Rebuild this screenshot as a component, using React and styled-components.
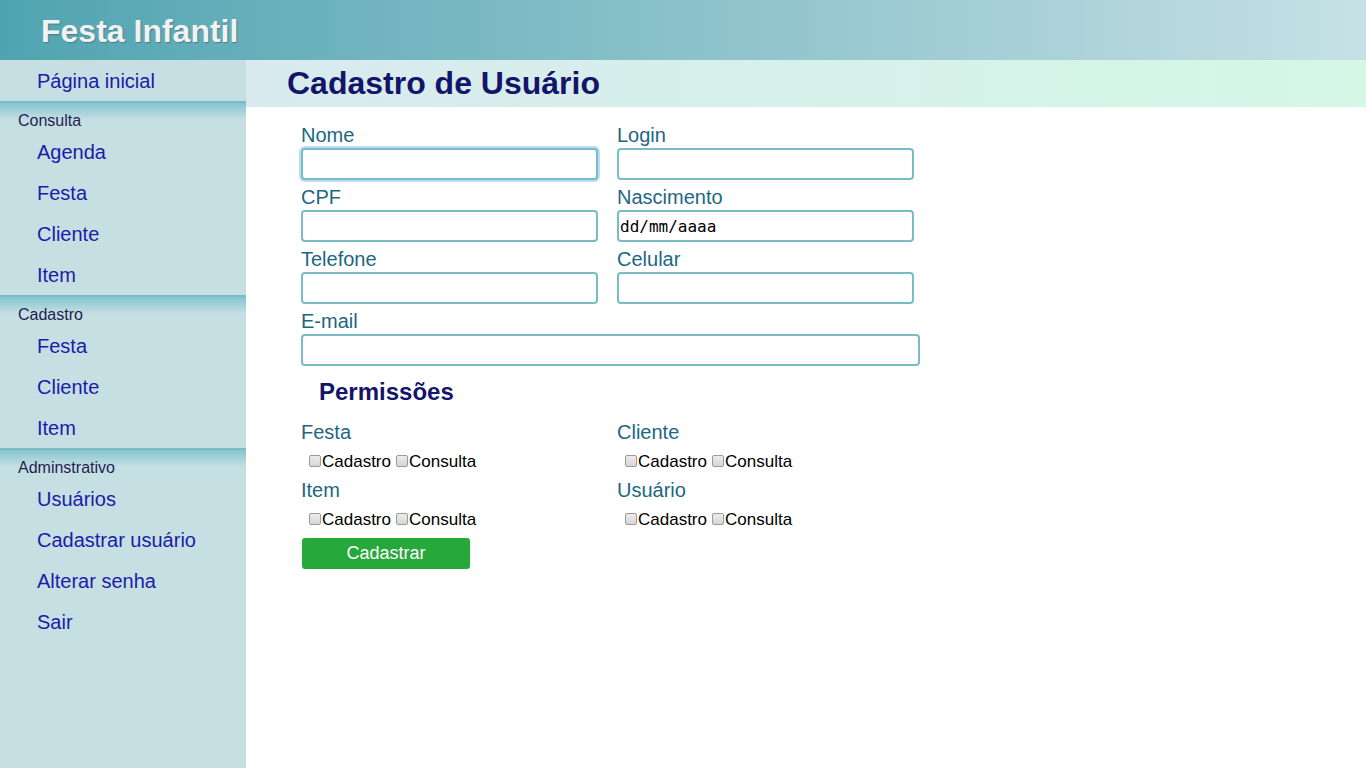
import React from 'react'
import styled, { createGlobalStyle } from 'styled-components'

const GlobalStyle = createGlobalStyle`
  html, body {
    margin: 0;
    padding: 0;
    font-family: "Liberation Sans", Arial, sans-serif;
    background: #fff;
  }
`

const Page = styled.div`
  display: flex;
  flex-direction: column;
  min-height: 768px;
`

const TopBar = styled.div`
  height: 60px;
  background: linear-gradient(to right, #50a4b1, #a8d0d7 75%, #c6e1e5);
  display: flex;
  align-items: center;
  padding-left: 41px;
`

const Brand = styled.div`
  font-size: 32px;
  font-weight: 700;
  color: #f2f2f2;
  text-shadow: 1px 1px 1px #4b7c86;
  transform: translateY(1px);
`

const Body = styled.div`
  flex: 1;
  display: flex;
`

const Sidebar = styled.div`
  width: 246px;
  flex-shrink: 0;
  background: #c5dfe3;
`

const NavLink = styled.div`
  height: 41px;
  box-sizing: border-box;
  padding-top: 2px;
  display: flex;
  align-items: center;
  padding-left: 37px;
  font-size: 20px;
  color: #1c1ca8;
`

const Section = styled.div`
  border-top: 2px solid #79bcc7;
`

const SectionTitle = styled.div`
  height: 28px;
  padding-left: 18px;
  padding-top: 8px;
  box-sizing: border-box;
  display: flex;
  align-items: center;
  font-size: 16px;
  color: #1e1e50;
  background: linear-gradient(to bottom, #86c5ce, #c5dfe3 60%);
`

const Main = styled.div`
  flex: 1;
`

const TitleBar = styled.div`
  height: 47px;
  background: linear-gradient(to right, #d8eaee, #d4f7e6);
  display: flex;
  align-items: center;
  padding-left: 41px;
`

const Title = styled.h1`
  margin: 0;
  font-size: 32px;
  font-weight: 700;
  color: #14146a;
`

const Form = styled.div`
  padding: 16px 0 0 55px;
  width: 619px;
`

const Grid = styled.div`
  display: grid;
  grid-template-columns: 297px 297px;
  column-gap: 19px;
`

const Field = styled.div`
  display: flex;
  flex-direction: column;
  grid-column: ${p => (p.$wide ? '1 / span 2' : 'auto')};
  width: ${p => (p.$wide ? '619px' : '297px')};
  margin-bottom: 5px;
`

const Label = styled.label`
  font-size: 20px;
  color: #1d6780;
  line-height: 25px;
  height: 25px;
`

const Input = styled.input`
  box-sizing: border-box;
  height: 32px;
  width: 100%;
  border: 2px solid #79bcc6;
  border-radius: 4px;
  outline: none;
  padding: 0 1px;
  font-size: 16px;
  font-family: "DejaVu Sans Mono", "Liberation Mono", monospace;
  color: #000;
  box-shadow: ${p => (p.$focus ? '0 0 0 2px #bcdcf7' : 'none')};
  &::placeholder {
    color: #000;
  }
`

const Subtitle = styled.h2`
  margin: 4px 0 0 18px;
  font-size: 24px;
  font-weight: 700;
  color: #14146a;
  height: 34px;
  line-height: 34px;
`

const PermGroup = styled.div`
  display: flex;
  flex-direction: column;
  margin-top: ${p => (p.$first ? '10px' : '0')};
`

const PermLabel = styled.div`
  font-size: 20px;
  color: #1d6780;
  height: 26px;
  line-height: 26px;
`

const Checks = styled.div`
  display: flex;
  align-items: center;
  height: 32px;
  box-sizing: border-box;
  padding: 2px 0 0 8px;
  font-size: 17px;
  color: #000;
`

const Check = styled.label`
  display: flex;
  align-items: center;
  margin-right: 5px;
`

const Box = styled.span`
  width: 12px;
  height: 12px;
  box-sizing: border-box;
  border: 1px solid #9a9a9a;
  border-radius: 2px;
  background: linear-gradient(#ececec, #d6d6d6);
  margin-right: 1px;
  transform: translateY(-1px);
`

const Button = styled.button`
  margin-top: 3px;
  margin-left: 1px;
  width: 168px;
  height: 31px;
  border: none;
  border-radius: 3px;
  background: #27a83a;
  color: #fff;
  font-size: 18px;
  font-family: "Liberation Sans", Arial, sans-serif;
`

const PermBox = ({ name, first }) => (
  <PermGroup $first={first}>
    <PermLabel>{name}</PermLabel>
    <Checks>
      <Check><Box />Cadastro</Check>
      <Check><Box />Consulta</Check>
    </Checks>
  </PermGroup>
)

const App = () => {
  return (
    <Page>
      <GlobalStyle />
      <TopBar>
        <Brand>Festa Infantil</Brand>
      </TopBar>
      <Body>
        <Sidebar>
          <NavLink>Página inicial</NavLink>
          <Section>
            <SectionTitle>Consulta</SectionTitle>
            <NavLink>Agenda</NavLink>
            <NavLink>Festa</NavLink>
            <NavLink>Cliente</NavLink>
            <NavLink>Item</NavLink>
          </Section>
          <Section>
            <SectionTitle>Cadastro</SectionTitle>
            <NavLink>Festa</NavLink>
            <NavLink>Cliente</NavLink>
            <NavLink>Item</NavLink>
          </Section>
          <Section>
            <SectionTitle>Adminstrativo</SectionTitle>
            <NavLink>Usuários</NavLink>
            <NavLink>Cadastrar usuário</NavLink>
            <NavLink>Alterar senha</NavLink>
            <NavLink>Sair</NavLink>
          </Section>
        </Sidebar>
        <Main>
          <TitleBar>
            <Title>Cadastro de Usuário</Title>
          </TitleBar>
          <Form>
            <Grid>
              <Field>
                <Label>Nome</Label>
                <Input $focus />
              </Field>
              <Field>
                <Label>Login</Label>
                <Input />
              </Field>
              <Field>
                <Label>CPF</Label>
                <Input />
              </Field>
              <Field>
                <Label>Nascimento</Label>
                <Input placeholder="dd/mm/aaaa" />
              </Field>
              <Field>
                <Label>Telefone</Label>
                <Input />
              </Field>
              <Field>
                <Label>Celular</Label>
                <Input />
              </Field>
              <Field $wide>
                <Label>E-mail</Label>
                <Input />
              </Field>
            </Grid>
            <Subtitle>Permissões</Subtitle>
            <Grid>
              <PermBox name="Festa" first />
              <PermBox name="Cliente" first />
              <PermBox name="Item" />
              <PermBox name="Usuário" />
            </Grid>
            <Button>Cadastrar</Button>
          </Form>
        </Main>
      </Body>
    </Page>
  )
}

export default App
